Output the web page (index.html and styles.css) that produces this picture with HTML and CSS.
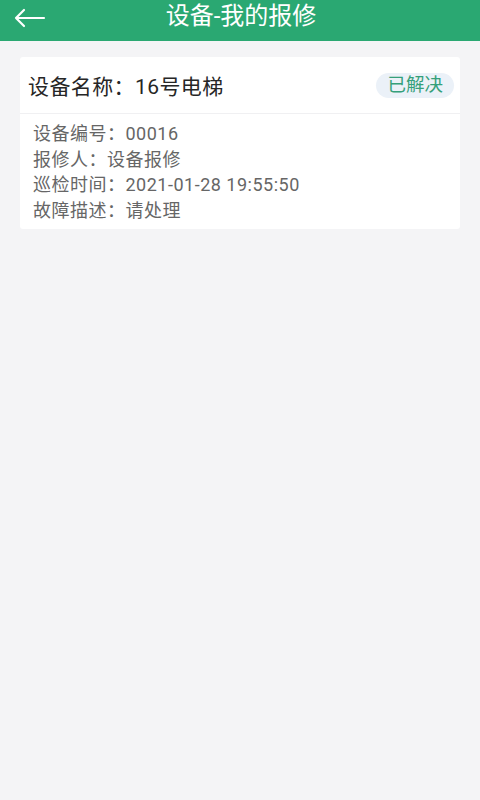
FILE: index.html
```html
<!DOCTYPE html>
<html lang="zh">
<head>
<meta charset="utf-8">
<link rel="stylesheet" href="styles.css">
</head>
<body>
<header class="topbar">
  <svg class="back" width="32" height="20" viewBox="0 0 32 20"><path d="M30 10H2M10 2L2 10L10 18" fill="none" stroke="#fff" stroke-width="2.2" stroke-linecap="round" stroke-linejoin="round"/></svg>
  <h1 class="title">设备-我的报修</h1>
</header>
<main class="content">
  <section class="card">
    <div class="card-head">
      <span class="name">设备名称：16号电梯</span>
      <span class="badge">已解决</span>
    </div>
    <div class="card-body">
      <p class="row">设备编号：00016</p>
      <p class="row">报修人：设备报修</p>
      <p class="row">巡检时间：2021-01-28 19:55:50</p>
      <p class="row">故障描述：请处理</p>
    </div>
  </section>
</main>
</body>
</html>
```
FILE: styles.css
```css
html, body {
  margin: 0;
  padding: 0;
}
body {
  width: 480px;
  height: 800px;
  background: #f4f4f6;
  font-family: Roboto, "Noto Sans CJK SC", sans-serif;
  overflow: hidden;
}
.topbar {
  height: 41px;
  background: #2aa872;
  position: relative;
  display: flex;
  align-items: center;
  justify-content: center;
}
.back {
  position: absolute;
  left: 14px;
  top: 8px;
}
.title {
  margin: 0;
  color: #fff;
  font-size: 24px;
  font-weight: 400;
  line-height: 30px;
  margin-top: -9px;
  margin-left: 2px;
}
.content {
  padding: 16px 20px;
}
.card {
  background: #fff;
  border-radius: 3px;
}
.card-head {
  height: 56px;
  display: flex;
  align-items: center;
  justify-content: space-between;
  padding: 0 6px 0 8px;
  border-bottom: 1px solid #f0f0f2;
}
.name {
  font-size: 21px;
  color: #262626;
  letter-spacing: 0.4px;
}
.badge {
  background: #ebf1f8;
  color: #35a07a;
  font-size: 18.5px;
  line-height: 25px;
  padding: 0 11px;
  border-radius: 13px;
}
.card-body {
  padding: 7px 13px 6px;
}
.row {
  margin: 0;
  font-size: 18px;
  line-height: 25.5px;
  color: #666;
  letter-spacing: 0.5px;
}
```
